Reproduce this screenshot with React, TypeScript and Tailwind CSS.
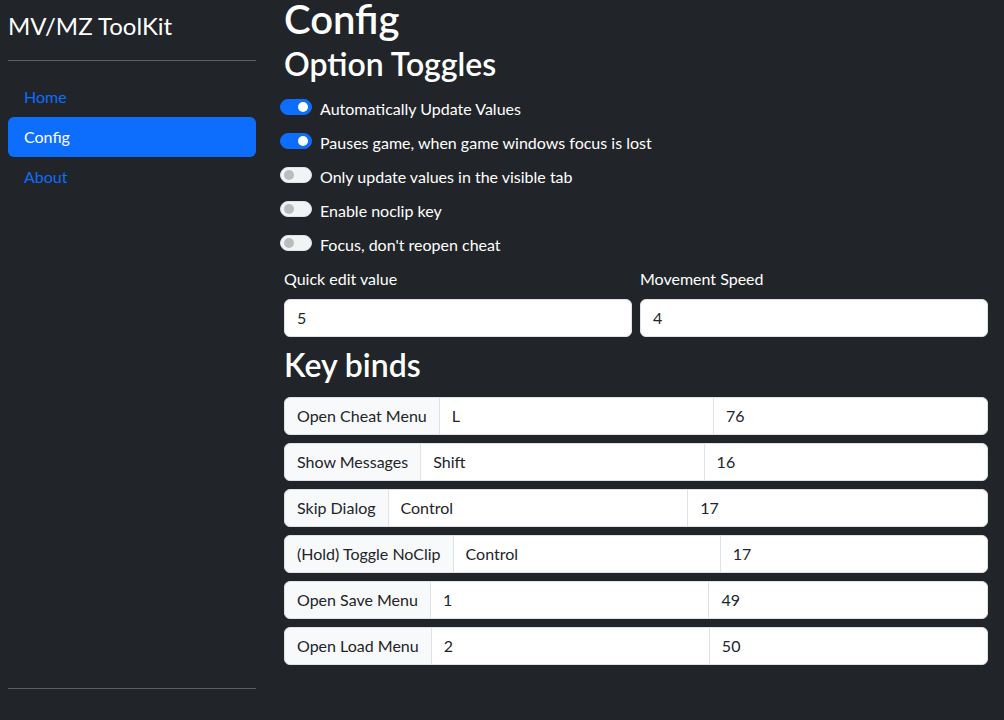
import React from "react";

const toggles = [
  { label: "Automatically Update Values", on: true },
  { label: "Pauses game, when game windows focus is lost", on: true },
  { label: "Only update values in the visible tab", on: false },
  { label: "Enable noclip key", on: false },
  { label: "Focus, don't reopen cheat", on: false },
];

const binds = [
  { name: "Open Cheat Menu", key: "L", code: "76" },
  { name: "Show Messages", key: "Shift", code: "16" },
  { name: "Skip Dialog", key: "Control", code: "17" },
  { name: "(Hold) Toggle NoClip", key: "Control", code: "17" },
  { name: "Open Save Menu", key: "1", code: "49" },
  { name: "Open Load Menu", key: "2", code: "50" },
];

function Switch({ on }: { on: boolean }) {
  return (
    <span
      className={
        on
          ? "relative inline-block h-4 w-8 shrink-0 rounded-full border border-[#0d6efd] bg-[#0d6efd]"
          : "relative inline-block h-4 w-8 shrink-0 rounded-full border border-[#dee2e6] bg-[#f1f3f5]"
      }
    >
      <span
        className={
          on
            ? "absolute right-[3px] top-[2px] h-[10px] w-[10px] rounded-full bg-white"
            : "absolute left-[3px] top-[2px] h-[10px] w-[10px] rounded-full bg-[#b8bdc2]"
        }
      />
    </span>
  );
}

export default function App() {
  return (
    <div className="flex h-[720px] w-full overflow-hidden bg-[#212529] font-['Lato','Liberation_Sans',sans-serif] text-[16px] text-white">
      <aside className="flex w-[264px] shrink-0 flex-col p-2">
        <div className="text-[24px] leading-9">MV/MZ ToolKit</div>
        <hr className="my-4 border-t border-[#5c5f64]" />
        <nav className="flex flex-col">
          <a className="block rounded-md px-4 py-2 text-[#0d6efd]">Home</a>
          <a className="block rounded-md bg-[#0d6efd] px-4 py-2 text-white">Config</a>
          <a className="block rounded-md px-4 py-2 text-[#0d6efd]">About</a>
        </nav>
        <hr className="mb-[23px] mt-auto border-t border-[#5c5f64]" />
      </aside>

      <main className="flex-1 pl-5 pr-4">
        <h1 className="-mt-[5px] text-[40px] font-semibold leading-[1.2]">Config</h1>
        <h2 className="mt-[2px] text-[32px] font-semibold leading-[1.2]">Option Toggles</h2>
        <div className="mt-[9px] flex flex-col">
          {toggles.map((t) => (
            <label key={t.label} className="flex h-[34px] items-center gap-2">
              <span className="-ml-1">
                <Switch on={t.on} />
              </span>
              <span>{t.label}</span>
            </label>
          ))}
        </div>

        <div className="mt-[5px] grid grid-cols-2 gap-2">
          <div>
            <div className="mb-2">Quick edit value</div>
            <div className="flex h-[38px] items-center rounded-md border border-[#dee2e6] bg-white px-3 text-[#212529]">5</div>
          </div>
          <div>
            <div className="mb-2">Movement Speed</div>
            <div className="flex h-[38px] items-center rounded-md border border-[#dee2e6] bg-white px-3 text-[#212529]">4</div>
          </div>
        </div>

        <h2 className="mt-[9px] text-[32px] font-semibold leading-[1.2]">Key binds</h2>
        <div className="mt-[12px] flex flex-col gap-2">
          {binds.map((b) => (
            <div key={b.name} className="flex h-[38px] text-[#212529]">
              <span className="flex items-center whitespace-nowrap rounded-l-md border border-[#dee2e6] bg-[#f8f9fa] px-3">
                {b.name}
              </span>
              <span className="-ml-px flex flex-1 items-center border border-[#dee2e6] bg-white px-3">{b.key}</span>
              <span className="-ml-px flex flex-1 items-center rounded-r-md border border-[#dee2e6] bg-white px-3">{b.code}</span>
            </div>
          ))}
        </div>
      </main>
    </div>
  );
}
